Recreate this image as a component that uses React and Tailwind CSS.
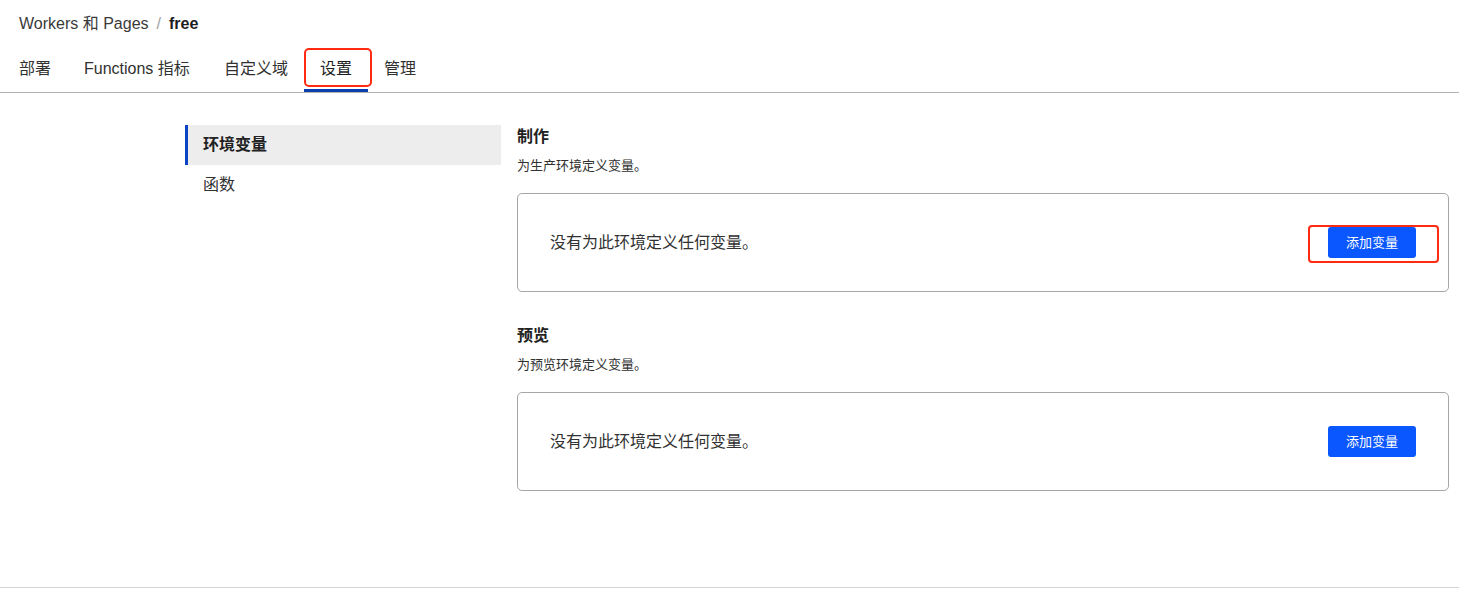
import React from "react";

const FONT = { fontFamily: '"Liberation Sans", "Noto Sans CJK SC", sans-serif' };

function EnvSection({ title, desc, highlight }) {
  return (
    <div>
      <div className="text-[16px] leading-[24px] font-bold text-[#222222]">{title}</div>
      <div className="mt-[7px] text-[13px] leading-[20px] text-[#313131]">{desc}</div>
      <div className="mt-[17px] h-[99px] border border-[#a6a6a6] rounded-[5px] flex items-center justify-between pl-[32px] pr-[32px]">
        <span className="text-[16px] text-[#313131]">没有为此环境定义任何变量。</span>
        <div className="relative">
          <button className="w-[88px] h-[31px] bg-[#0a56ff] text-white text-[13px] rounded-[3px] flex items-center justify-center">
            添加变量
          </button>
          {highlight && (
            <div className="absolute left-[-20px] top-[-2px] w-[131px] h-[38px] border-2 border-[#ff2a12] rounded-[4px] pointer-events-none" />
          )}
        </div>
      </div>
    </div>
  );
}

const TABS = [
  { label: "部署", w: "w-[65px]" },
  { label: "Functions 指标", w: "w-[140px]" },
  { label: "自定义域", w: "w-[96px]" },
  { label: "设置", w: "w-[64px]", active: true },
  { label: "管理", w: "w-[64px]" },
];

export default function App() {
  return (
    <div style={FONT} className="w-[1459px] h-[595px] bg-white flex flex-col text-[#313131]">
      <div className="h-[48px] flex items-center pl-[19px] text-[16px]">
        <span className="text-[#3a3a3a]">Workers 和 Pages</span>
        <span className="mx-[8px] text-[#a0a0a0]">/</span>
        <span className="font-bold text-[#1d1d1d]">free</span>
      </div>
      <div className="h-[45px] flex pl-[3px] border-b border-[#b3b3b3]">
        {TABS.map((t) => (
          <div
            key={t.label}
            className={
              t.active
                ? "relative shrink-0 w-[64px] px-4 pt-[9px] text-[16px] leading-[24px] whitespace-nowrap text-[#1d1d1d] border-b-[3px] border-[#0a3fb0]"
                : "relative shrink-0 px-4 pt-[9px] text-[16px] leading-[24px] whitespace-nowrap text-[#313131] " + t.w
            }
          >
            {t.label}
            {t.active && (
              <div className="absolute left-0 top-0 w-[68px] h-[39px] border-2 border-[#ff2a12] rounded-[5px] pointer-events-none" />
            )}
          </div>
        ))}
      </div>
      <div className="flex-1 flex pt-[32px]">
        <div className="ml-[185px] w-[316px]">
          <div className="h-[40px] bg-[#ededed] border-l-[3px] border-[#0a46c4] pl-[15px] flex items-center text-[16px] font-bold text-[#222222]">
            环境变量
          </div>
          <div className="h-[40px] pl-[18px] flex items-center text-[16px] text-[#313131]">函数</div>
        </div>
        <div className="ml-[16px] w-[932px]">
          <EnvSection title="制作" desc="为生产环境定义变量。" highlight />
          <div className="mt-[32px]">
            <EnvSection title="预览" desc="为预览环境定义变量。" />
          </div>
        </div>
      </div>
      <div className="h-[8px] border-t border-[#d4d4d4]" />
    </div>
  );
}
